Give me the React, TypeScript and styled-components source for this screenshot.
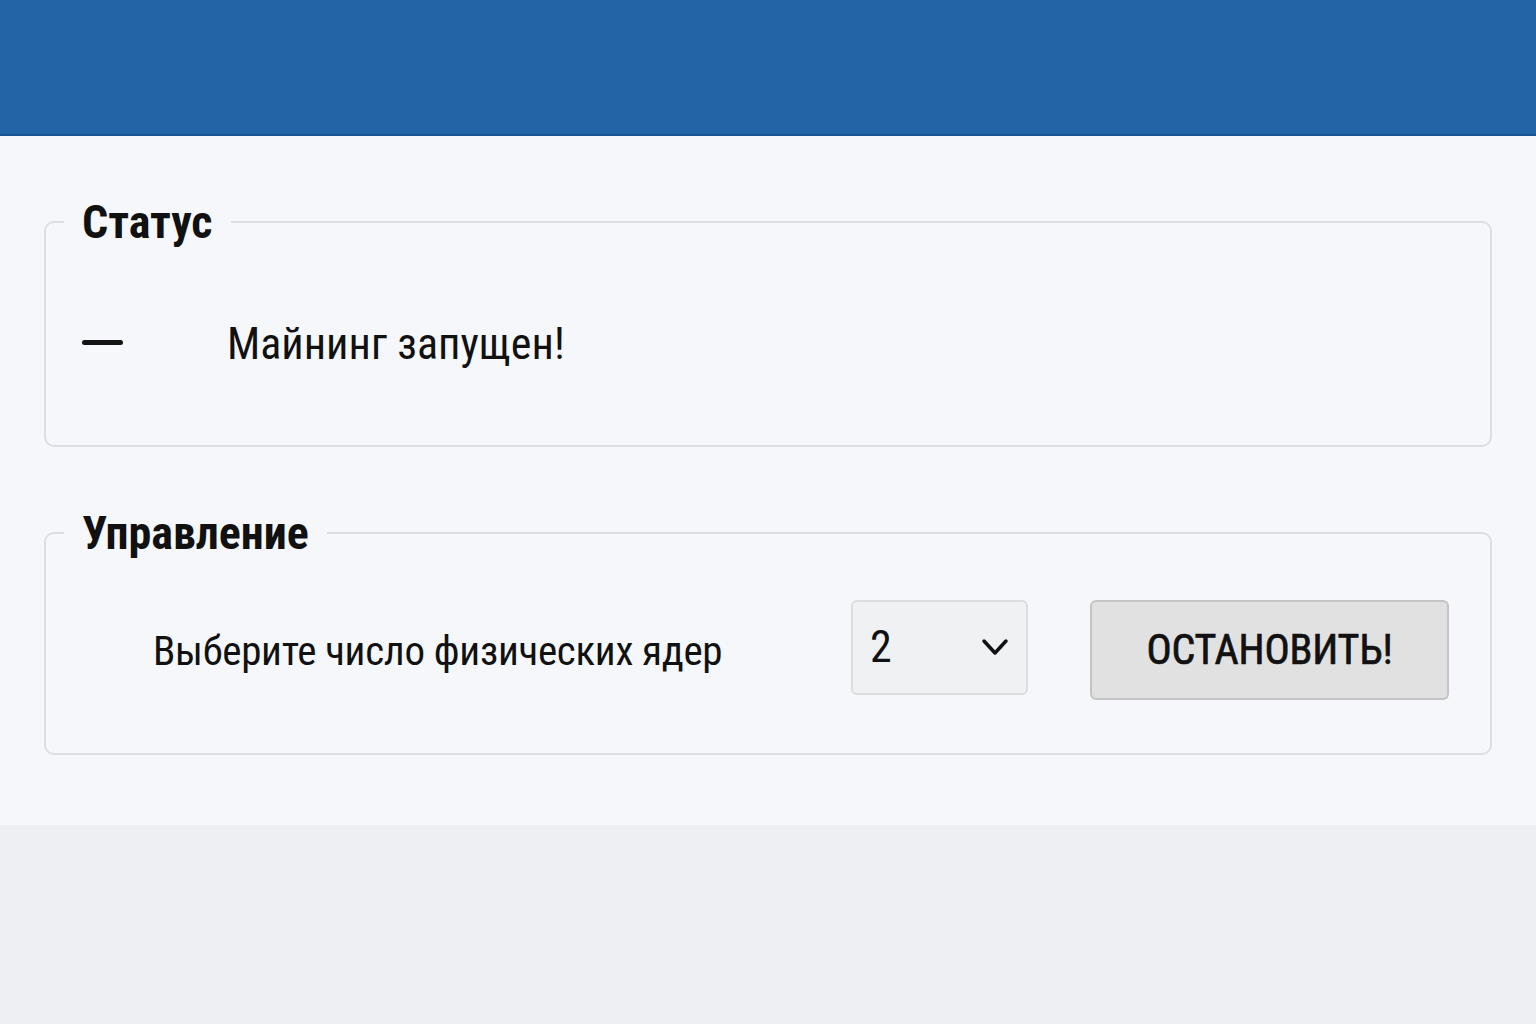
import { createGlobalStyle } from 'styled-components';
import styled from 'styled-components';

const GlobalStyle = createGlobalStyle`
  html, body {
    margin: 0;
    padding: 0;
    background: #eeeff3;
  }
  body {
    font-family: "Liberation Sans Narrow", "Roboto Condensed", "Arial Narrow", "Liberation Sans", sans-serif;
    color: #111;
  }
`;

const Header = styled.header`
  height: 134px;
  background: #2264a6;
  border-bottom: 2px solid #1a5494;
`;

const Main = styled.main`
  background: #f5f7fa;
  height: 689px;
  box-sizing: border-box;
  padding: 62px 44px 0;
  display: flex;
  flex-direction: column;
  gap: 62px;
`;

const Group = styled.fieldset`
  margin: 0;
  padding: 0;
  border: 2px solid #dcdee2;
  border-radius: 10px;
  min-width: 0;
`;

const Legend = styled.legend`
  margin-left: 18px;
  padding: 0 18px;
  font-size: 46px;
  line-height: 48px;
  font-weight: 700;
`;

const StatusRow = styled.div`
  height: 196px;
  margin-bottom: 3px;
  display: flex;
  align-items: center;
  padding-left: 36px;
`;

const Dash = styled.span`
  width: 41px;
  height: 5px;
  border-radius: 3px;
  background: #141414;
  margin: 0 104px 3px 0;
`;

const StatusText = styled.span`
  font-size: 44px;
`;

const ControlRow = styled.div`
  height: 180px;
  margin-bottom: 16px;
  display: grid;
  grid-template-columns: 1fr 177px 359px;
  column-gap: 62px;
  align-items: center;
  padding: 0 41px 0 107px;
`;

const Label = styled.span`
  font-size: 41px;
  letter-spacing: -0.3px;
  padding-top: 8px;
`;

const Select = styled.div`
  height: 95px;
  box-sizing: border-box;
  border: 2px solid #dcdde0;
  border-radius: 6px;
  background: #f0f1f3;
  display: flex;
  align-items: center;
  justify-content: space-between;
  padding: 0 16px 0 17px;
  font-size: 44px;

  svg {
    width: 30px;
    height: 20px;
  }
`;

const StopButton = styled.button`
  height: 100px;
  margin-top: 5px;
  border: 2px solid #c4c4c4;
  border-radius: 6px;
  background: #e1e1e1;
  font-family: inherit;
  font-size: 42px;
  font-weight: 400;
  -webkit-text-stroke: 0.7px #111;
  letter-spacing: -0.2px;
  color: #111;
  padding: 0;
  cursor: pointer;
`;

export default function App() {
  return (
    <>
      <GlobalStyle />
      <Header />
      <Main>
        <Group>
          <Legend>Статус</Legend>
          <StatusRow>
            <Dash />
            <StatusText>Майнинг запущен!</StatusText>
          </StatusRow>
        </Group>
        <Group>
          <Legend>Управление</Legend>
          <ControlRow>
            <Label>Выберите число физических ядер</Label>
            <Select>
              2
              <svg viewBox="0 0 30 20" fill="none" stroke="#111" strokeWidth="3.5" strokeLinecap="round" strokeLinejoin="round">
                <path d="M4 4l11 12 11-12" />
              </svg>
            </Select>
            <StopButton>ОСТАНОВИТЬ!</StopButton>
          </ControlRow>
        </Group>
      </Main>
    </>
  );
}
